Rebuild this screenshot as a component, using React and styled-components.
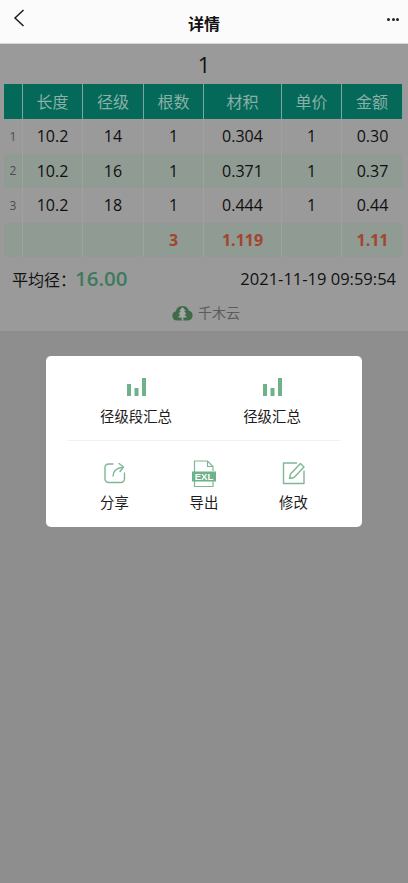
import React from "react";
import styled, { createGlobalStyle } from "styled-components";

const Global = createGlobalStyle`
  html, body { margin: 0; padding: 0; background: #8e8e8e; }
  body { font-family: "Open Sans", "Noto Sans CJK SC", sans-serif; color: #111; }
  * { box-sizing: border-box; }
`;
const Page = styled.div`
  width: 408px; height: 883px; overflow: hidden; display: flex; flex-direction: column;
  background: #8e8e8e;
`;
const Header = styled.header`
  height: 44px; flex: none; background: #fbfbfb; border-bottom: 1px solid #d8d8d8;
  display: grid; grid-template-columns: 60px 1fr 60px; align-items: center;
`;
const BackButton = styled.div`
  padding: 0 0 8px 13px; display: flex; height: 100%; align-items: center;
`;
const Title = styled.h1`
  margin: 0; font: 700 16px/1 "Noto Sans CJK SC", sans-serif; text-align: center; color: #111; padding-top: 3px;
`;
const More = styled.div`
  display: flex; justify-content: flex-end; padding: 0 9px 5px 0; height: 100%; align-items: center; gap: 1.5px;
`;
const Dot = styled.span`
  width: 3px; height: 3px; border-radius: 50%; background: #222;
`;
const Content = styled.section`
  height: 287px; flex: none; background: #9a9a9a; padding: 0 5px 0 4px; display: flex; flex-direction: column;
`;
const SheetName = styled.div`
  height: 40px; flex: none; display: flex; align-items: center; justify-content: center;
  font-size: 22px; color: #111; padding-bottom: 1px; padding-left: 1px;
`;
const Table = styled.div`
  display: grid; grid-template-columns: 19px 60px 61px 60px 78px 60px 61px;
  grid-template-rows: 35px repeat(4, 34.6px);
`;
const HeadCell = styled.div`
  background: #05695a; color: #8ab0a7; font: 400 16px/1 "Noto Sans CJK SC", sans-serif;
  border-right: 1px solid #7fa69c; padding-bottom: 2px;
  display: flex; align-items: center; justify-content: center;
  &:last-child { border-right: 0; }
`;
const Cell = styled.div`
  background: ${p => (p.$shade ? "#8f9b93" : "#9a9a9a")};
  border-right: 1px solid ${p => (p.$shade ? "#9aa59d" : "#a0a0a0")};
  color: ${p => (p.$total ? "#a3452c" : p.$index ? "#4c4c4c" : "#0f0f0f")};
  font-size: ${p => (p.$index ? "12px" : "16px")};
  font-weight: ${p => (p.$total ? 700 : 400)};
  display: flex; align-items: center; justify-content: center;
  &:nth-child(7n) { border-right: 0; }
`;
const InfoRow = styled.div`
  display: flex; justify-content: space-between; align-items: center; padding: 2px 7px 0 8px; height: 41px;
`;
const AvgLabel = styled.span`
  font-size: 16px; color: #111; display: flex; align-items: center;
`;
const AvgValue = styled.span`
  font-size: 20.500px; font-weight: 600; color: #3f7a5d; margin: -2px 0 0 -1px;
`;
const DateText = styled.span`
  font-size: 16.500px; color: #111;
`;
const Brand = styled.div`
  display: flex; justify-content: center; align-items: center; gap: 5px; height: 28px;
  font: 400 14px/1 "Noto Sans CJK SC", sans-serif; color: #5b5b5b; padding-left: 5px;
`;
const Dialog = styled.div`
  width: 316px; height: 171px; margin: 25px 0 0 46px; background: #fff; border-radius: 5px;
  display: flex; flex-direction: column; padding: 0 22px;
`;
const TopRow = styled.div`
  display: grid; grid-template-columns: 1fr 1fr; height: 85px; border-bottom: 1px solid #f1f1f1;
`;
const BottomRow = styled.div`
  display: grid; grid-template-columns: repeat(3, 89.500px); justify-content: center; flex: 1;
`;
const Action = styled.div`
  display: flex; flex-direction: column; align-items: center;
  padding-top: ${p => p.$pt}px; color: #1c1c1c;
`;
const ActionLabel = styled.span`
  font: 400 14.400px/20px "Noto Sans CJK SC", sans-serif; margin-top: ${p => p.$mt}px;
`;
const Icon = styled.svg`
  display: block; flex: none;
`;

const Back = () => (
  <Icon width="12" height="18" viewBox="0 0 12 18" fill="none" stroke="#1c1c1c" strokeWidth="1.500">
    <path d="M10.500 1 2 9l8.500 8" />
  </Icon>
);
const Bars = () => (
  <Icon width="19" height="18" viewBox="0 0 19 18" fill="#6db288">
    <rect x="0" y="6" width="4" height="12" />
    <rect x="7.500" y="10" width="4" height="8" />
    <rect x="15" y="0" width="4" height="18" />
  </Icon>
);
const Share = () => (
  <Icon width="24" height="24" viewBox="0 0 24 24" fill="none" stroke="#7fb795" strokeWidth="1.400" strokeLinecap="round" strokeLinejoin="round">
    <path d="M10 3H5.500A3.500 3.500 0 0 0 2 6.500V18a3.500 3.500 0 0 0 3.500 3.500H18a3.500 3.500 0 0 0 3.500-3.500v-6" />
    <path d="M10 15c.3-4.500 3.500-8 9-8.500" />
    <path d="M16 2.500 20.500 6 17 10.500" />
  </Icon>
);
const Excel = () => (
  <Icon width="24" height="28" viewBox="0 0 24 28" fill="none">
    <path d="M2.500 21V1h13l5.500 5.500V11M2.500 21v5.500h18.500V21" stroke="#7fb795" strokeWidth="1.200" />
    <path d="M15.500 1v5.500H21" stroke="#7fb795" strokeWidth="1.200" />
    <rect x="0" y="11.500" width="24" height="10" fill="#6db288" />
    <text x="12" y="20" textAnchor="middle" fontFamily="Liberation Sans" fontWeight="700" fontSize="9.500" fill="#fff">EXL</text>
  </Icon>
);
const Edit = () => (
  <Icon width="24" height="24" viewBox="0 0 24 24" fill="none" stroke="#7fb795" strokeWidth="1.400" strokeLinejoin="round">
    <path d="M22 9.500V22.500H1.500V2H15" />
    <path d="M7.500 17.500 8.500 13 18.500 2.500 22 6 12 16.500z" />
  </Icon>
);
const CloudTree = () => (
  <Icon width="21" height="17" viewBox="0 0 21 17">
    <path fill="#3f6b4a" d="M5 16.500A4.700 4.700 0 0 1 3.800 7.300 6.800 6.800 0 0 1 16.800 6.500 5.100 5.100 0 0 1 16 16.500Z" />
    <path fill="#a6a6a6" d="M10.500 3 13.800 7h-1.700l2.500 3.300h-2.200l2.500 3.200h-3.600V16.500H9.700v-3H6l2.500-3.200H6.300L8.800 7H7.200Z" />
  </Icon>
);

const rows = [
  ["1", "10.2", "14", "1", "0.304", "1", "0.30"],
  ["2", "10.2", "16", "1", "0.371", "1", "0.37"],
  ["3", "10.2", "18", "1", "0.444", "1", "0.44"],
];
const totals = ["", "", "", "3", "1.119", "", "1.11"];
const heads = ["", "长度", "径级", "根数", "材积", "单价", "金额"];

export default function App() {
  return (
    <Page>
      <Global />
      <Header>
        <BackButton><Back /></BackButton>
        <Title>详情</Title>
        <More><Dot /><Dot /><Dot /></More>
      </Header>
      <Content>
        <SheetName>1</SheetName>
        <Table>
          {heads.map((h, i) => <HeadCell key={i}>{h}</HeadCell>)}
          {rows.flatMap((r, ri) =>
            r.map((c, ci) => (
              <Cell key={`${ri}-${ci}`} $shade={ri === 1} $index={ci === 0}>{c}</Cell>
            ))
          )}
          {totals.map((c, i) => <Cell key={i} $shade $total>{c}</Cell>)}
        </Table>
        <InfoRow>
          <AvgLabel>平均径：<AvgValue>16.00</AvgValue></AvgLabel>
          <DateText>2021-11-19 09:59:54</DateText>
        </InfoRow>
        <Brand><CloudTree />千木云</Brand>
      </Content>
      <Dialog>
        <TopRow>
          <Action $pt={22}><Bars /><ActionLabel $mt={10}>径级段汇总</ActionLabel></Action>
          <Action $pt={22}><Bars /><ActionLabel $mt={10}>径级汇总</ActionLabel></Action>
        </TopRow>
        <BottomRow>
          <Action $pt={20}><Share /><ActionLabel $mt={7}>分享</ActionLabel></Action>
          <Action $pt={19}><Excel /><ActionLabel $mt={4}>导出</ActionLabel></Action>
          <Action $pt={20}><Edit /><ActionLabel $mt={7}>修改</ActionLabel></Action>
        </BottomRow>
      </Dialog>
    </Page>
  );
}
